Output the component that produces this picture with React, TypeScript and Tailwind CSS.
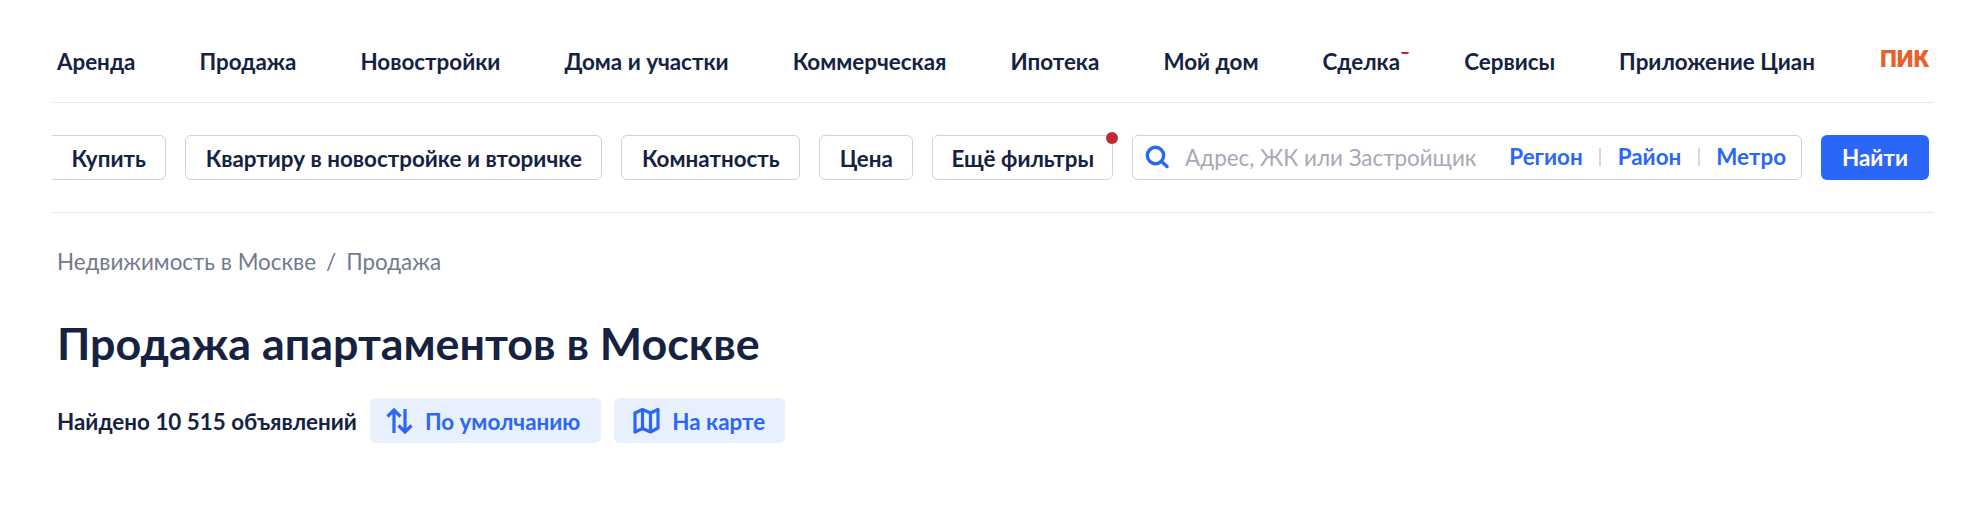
const navItems = [
  "Аренда",
  "Продажа",
  "Новостройки",
  "Дома и участки",
  "Коммерческая",
  "Ипотека",
  "Мой дом",
  "Сделка",
  "Сервисы",
  "Приложение Циан",
];

function Chip({ children, className = "px-[19.5px]" }: { children: React.ReactNode; className?: string }) {
  return (
    <button
      type="button"
      className={`relative h-[45px] shrink-0 rounded-[6px] border border-[#ced1e0] bg-white pt-[3px] text-[22.4px] font-bold text-[#152242] ${className}`}
    >
      {children}
    </button>
  );
}

function SearchIcon() {
  return (
    <svg width="24" height="24" viewBox="0 0 24 24" fill="none" stroke="#2b67f6" strokeWidth="3.4" strokeLinecap="round">
      <circle cx="10.5" cy="10.5" r="8.2" />
      <path d="M17 17l5 4.5" />
    </svg>
  );
}

function SortIcon() {
  return (
    <svg width="27" height="28" viewBox="0 0 27 28" fill="none" stroke="#2b67f6" strokeWidth="3.2">
      <path d="M8 26V3M1.5 9.5 8 3l6.5 6.5" />
      <path d="M19 2v23M12.5 18.5 19 25l6.5-6.5" />
    </svg>
  );
}

function MapIcon() {
  return (
    <svg width="27" height="27" viewBox="0 0 27 27" fill="none" stroke="#2b67f6" strokeWidth="3.2" strokeLinejoin="round">
      <path d="M2 6 9.5 2.5l8 3.5L25 2.5v18.5L17.5 25l-8-3.5L2 25z" />
      <path d="M9.5 2.5v19M17.5 6v19" />
    </svg>
  );
}

export default function App() {
  return (
    <div className="h-[526px] w-[1986px] bg-white px-[52px] font-['Lato','Liberation_Sans',sans-serif] text-[#152242]">
      <nav className="flex h-[103px] items-center justify-between border-b border-[#e8e9ee] pl-[5px] pr-[5px] pt-[21px]">
        <div className="flex items-center gap-[64px] text-[22.4px] font-bold">
          {navItems.map((item) => (
            <span key={item} className="relative whitespace-nowrap">
              {item}
              {item === "Сделка" && <span className="absolute -right-[9px] top-[7px] h-[2.5px] w-[8px] rounded-b-full bg-[#c5242f]" />}
            </span>
          ))}
        </div>
        <span className="pb-[6px] font-['Roboto','Liberation_Sans',sans-serif] text-[24px] font-black leading-none text-[#ea5f2c]">ПИК</span>
      </nav>

      <div className="flex h-[110px] items-center gap-[19px] border-b border-[#e8e9ee] pb-[1px] pr-[5px]">
        <div className="flex flex-1 items-center gap-[19px]">
          <Chip className="rounded-l-none border-l-0 px-[19.5px]">Купить</Chip>
          <Chip>Квартиру в новостройке и вторичке</Chip>
          <Chip>Комнатность</Chip>
          <Chip>Цена</Chip>
          <Chip className="px-[18px]">
            Ещё фильтры
            <span className="absolute -right-[6px] -top-[4px] h-[12px] w-[12px] rounded-full bg-[#c22a35]" />
          </Chip>
          <div className="flex h-[45px] flex-1 items-center rounded-[6px] border border-[#ced1e0] pl-[12px] pr-[15px] text-[22.4px]">
            <SearchIcon />
            <span className="ml-[16px] flex-1 whitespace-nowrap pt-[1px] text-[#a7a9b6]">Адрес, ЖК или Застройщик</span>
            <span className="font-bold text-[#2b67f6]">Регион</span>
            <span className="mx-[16.5px] h-[18px] w-[2px] bg-[#d6d8e0]" />
            <span className="font-bold text-[#2b67f6]">Район</span>
            <span className="mx-[16.5px] h-[18px] w-[2px] bg-[#d6d8e0]" />
            <span className="font-bold text-[#2b67f6]">Метро</span>
          </div>
        </div>
        <button type="button" className="h-[45px] w-[108px] shrink-0 rounded-[6px] bg-[#2b67f6] pt-[2px] text-[22.4px] font-bold text-white">
          Найти
        </button>
      </div>

      <div className="pl-[5px]">
        <div className="mt-[36px] text-[22.4px] leading-[26px] text-[#737a8e]">
          Недвижимость в Москве<span className="ml-[10px] mr-[10px]">/</span>Продажа
        </div>
        <h1 className="mt-[42px] text-[44.8px] font-bold leading-[52px]">Продажа апартаментов в Москве</h1>
        <div className="mt-[29px] flex items-center">
          <span className="pt-[3px] text-[22.4px] font-bold">Найдено 10 515 объявлений</span>
          <button type="button" className="ml-[13px] flex h-[45px] items-center gap-[12px] rounded-[6px] bg-[#e8f0fd] pl-[16px] pr-[21px] text-[22.4px] font-bold text-[#2b67f6]">
            <SortIcon />
            <span className="pt-[2px]">По умолчанию</span>
          </button>
          <button type="button" className="ml-[13px] flex h-[45px] items-center gap-[12px] rounded-[6px] bg-[#e8f0fd] pl-[19px] pr-[20px] text-[22.4px] font-bold text-[#2b67f6]">
            <MapIcon />
            <span className="pt-[2px]">На карте</span>
          </button>
        </div>
      </div>
    </div>
  );
}
